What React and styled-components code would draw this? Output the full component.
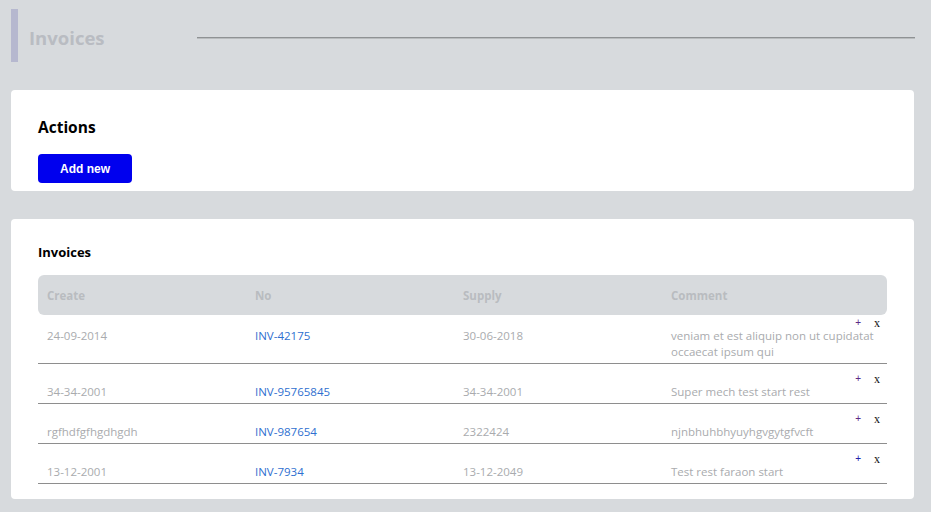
import React from "react";
import styled, { createGlobalStyle } from "styled-components";

const Global = createGlobalStyle`
  html, body { margin: 0; padding: 0; background: #d7dadd; }
  body { font-family: "Open Sans", "Noto Sans", sans-serif; }
`;

const Page = styled.div`
  padding: 9px 17px 12px 11px;
  display: flex;
  flex-direction: column;
  gap: 28px;
`;

const Header = styled.header`
  display: flex;
  align-items: center;
  height: 53px;
`;

const Accent = styled.div`
  width: 7px;
  align-self: stretch;
  background: #b6b8cf;
`;

const PageTitle = styled.h1`
  margin: 3px 0 0 11px;
  width: 168px;
  font-size: 18.5px;
  font-weight: 700;
  color: #b9bcc2;
`;

const Rule = styled.div`
  flex: 1;
  height: 1px;
  margin: 5px -1px 0 0;
  background: #8f9294;
  border-bottom: 1px solid #b9bcbe;
`;

const Card = styled.section`
  background: #fff;
  border-radius: 4px;
  padding: ${(p) => p.$pad};
`;

const CardTitle = styled.h2`
  margin: 0;
  font-size: ${(p) => p.$size};
  line-height: ${(p) => p.$lh};
  font-weight: 700;
  color: #000;
`;

const Button = styled.button`
  margin-top: 16px;
  width: 94px;
  height: 29px;
  border: none;
  border-radius: 4px;
  background: #0000ee;
  color: #fff;
  font-family: "Liberation Sans", Arial, sans-serif;
  font-weight: 700;
  font-size: 12px;
  display: block;
`;

const Table = styled.div`
  margin-top: 14px;
`;

const HeadRow = styled.div`
  display: grid;
  grid-template-columns: 208px 208px 208px 1fr;
  height: 40px;
  align-items: center;
  padding-left: 9px;
  background: #d7dadd;
  border-radius: 6px;
`;

const HeadCell = styled.div`
  font-size: 11.5px;
  font-weight: 700;
  color: #b9bcc0;
`;

const Row = styled.div`
  display: flex;
  flex-direction: column;
  justify-content: flex-end;
  min-height: 40px;
  box-sizing: border-box;
  padding: 2px 0 3px;
  border-bottom: 1px solid #8e8e8e;
`;

const Actions = styled.div`
  display: flex;
  justify-content: flex-end;
  gap: 13px;
  height: 11px;
  padding-right: 7px;
  align-items: center;
`;

const ActionBtn = styled.span`
  font-family: ${(p) => (p.$serif ? '"Liberation Serif", serif' : '"Liberation Sans", sans-serif')};
  font-size: ${(p) => (p.$serif ? "12px" : "10px")};
  color: ${(p) => p.$color};
  line-height: 12px;
`;

const Cells = styled.div`
  display: grid;
  grid-template-columns: 208px 208px 208px 1fr;
  padding-left: 9px;
  align-items: start;
`;

const Cell = styled.div`
  font-size: 11.5px;
  line-height: 16px;
  color: ${(p) => (p.$link ? "#2f6fd0" : "#a9abae")};
`;

const rows = [
  { c: "24-09-2014", n: "INV-42175", s: "30-06-2018", m: "veniam et est aliquip non ut cupidatat occaecat ipsum qui", plus: "#5b2b86" },
  { c: "34-34-2001", n: "INV-95765845", s: "34-34-2001", m: "Super mech test start rest", plus: "#5b2b86" },
  { c: "rgfhdfgfhgdhgdh", n: "INV-987654", s: "2322424", m: "njnbhuhbhyuyhgvgytgfvcft", plus: "#5b2b86" },
  { c: "13-12-2001", n: "INV-7934", s: "13-12-2049", m: "Test rest faraon start", plus: "#2222aa" },
];

export default function App() {
  return (
    <>
      <Global />
      <Page>
        <Header>
          <Accent />
          <PageTitle>Invoices</PageTitle>
          <Rule />
        </Header>
        <Card $pad="26px 27px 8px">
          <CardTitle $size="15.5px" $lh="22px">Actions</CardTitle>
          <Button>Add new</Button>
        </Card>
        <Card $pad="24px 27px 15px">
          <CardTitle $size="13px" $lh="18px">Invoices</CardTitle>
          <Table>
            <HeadRow>
              <HeadCell>Create</HeadCell>
              <HeadCell>No</HeadCell>
              <HeadCell>Supply</HeadCell>
              <HeadCell>Comment</HeadCell>
            </HeadRow>
            {rows.map((r, i) => (
              <Row key={i}>
                <Actions>
                  <ActionBtn $color={r.plus}>+</ActionBtn>
                  <ActionBtn $serif $color="#111">x</ActionBtn>
                </Actions>
                <Cells>
                  <Cell>{r.c}</Cell>
                  <Cell $link>{r.n}</Cell>
                  <Cell>{r.s}</Cell>
                  <Cell>{r.m}</Cell>
                </Cells>
              </Row>
            ))}
          </Table>
        </Card>
      </Page>
    </>
  );
}
